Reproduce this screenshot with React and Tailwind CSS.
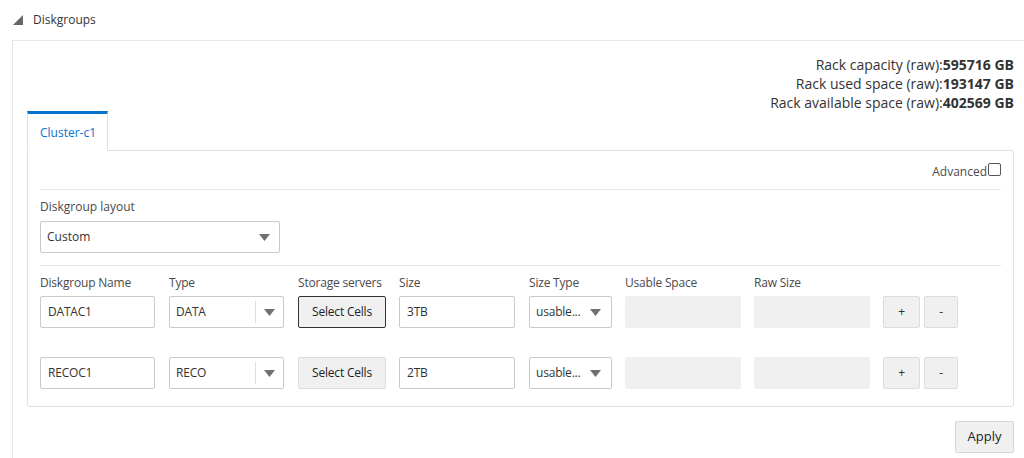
import React from "react";

const font = { fontFamily: '"Open Sans", "Noto Sans", Arial, sans-serif' };

function Caret() {
  return (
    <svg width="11" height="7" viewBox="0 0 11 7" className="block">
      <path d="M0 0 L11 0 L5.5 7 Z" fill="#707070" />
    </svg>
  );
}

function Label({ w, children }) {
  return <div className={`${w} shrink-0 text-[12px] tracking-[-0.2px] text-[#4a4a4a] leading-[16px]`}>{children}</div>;
}

function Row({ name, type, focused, size }) {
  return (
    <div className="flex items-center h-[32px] tracking-[-0.2px]">
      <div className="w-[115px] h-[32px] shrink-0 border border-[#c9c9c9] rounded-[2px] flex items-center px-[7px] text-[12px] text-[#333]">{name}</div>
      <div className="w-[115px] h-[32px] ml-[14px] shrink-0 border border-[#c9c9c9] rounded-[2px] flex items-center text-[12px] text-[#333]">
        <div className="flex-1 px-[6px]">{type}</div>
        <div className="w-px h-[22px] bg-[#e0e0e0]" />
        <div className="w-[27px] flex justify-center"><Caret /></div>
      </div>
      <div className={`w-[88px] h-[32px] ml-[14px] shrink-0 rounded-[2px] flex items-center justify-center text-[12px] text-[#222] bg-[#f0f0f0] ${focused ? "border border-[#333]" : "border border-[#dcdcdc]"}`}>Select Cells</div>
      <div className="w-[116px] h-[32px] ml-[13px] shrink-0 border border-[#c9c9c9] rounded-[2px] flex items-center px-[7px] text-[12px] text-[#333]">{size}</div>
      <div className="w-[83px] h-[32px] ml-[14px] shrink-0 border border-[#c9c9c9] rounded-[2px] flex items-center text-[12px] text-[#333]">
        <div className="flex-1 pl-[6px]">usable...</div>
        <div className="pr-[10px]"><Caret /></div>
      </div>
      <div className="w-[116px] h-[32px] ml-[13px] shrink-0 rounded-[2px] bg-[#f0f0f0]" />
      <div className="w-[116px] h-[32px] ml-[13px] shrink-0 rounded-[2px] bg-[#f0f0f0]" />
      <div className="w-[37px] h-[32px] ml-[13px] shrink-0 rounded-[2px] bg-[#f0f0f0] border border-[#dcdcdc] flex items-center justify-center text-[12px] text-[#333]">+</div>
      <div className="w-[34px] h-[32px] ml-[4px] shrink-0 rounded-[2px] bg-[#f0f0f0] border border-[#dcdcdc] flex items-center justify-center text-[12px] text-[#333]">-</div>
    </div>
  );
}

export default function App() {
  return (
    <div className="w-[1024px] h-[458px] bg-white overflow-hidden text-[#333]" style={font}>
      <div className="flex items-center h-[40px] pl-[13px]">
        <svg width="10" height="10" viewBox="0 0 10 10" className="block mt-[-1px]">
          <path d="M10 0 L10 10 L0 10 Z" fill="#666" />
        </svg>
        <span className="ml-[10px] text-[12px] text-[#333]">Diskgroups</span>
      </div>
      <div className="ml-[12px] border-l border-t border-[#e6e6e6] h-[418px] pr-[10px]">
        <div className="flex flex-col items-end pt-[14px] text-[14px] leading-[19px] text-[#333]">
          <div>Rack capacity (raw):<b>595716 GB</b></div>
          <div>Rack used space (raw):<b>193147 GB</b></div>
          <div>Rack available space (raw):<b>402569 GB</b></div>
        </div>
        <div className="ml-[14px] mt-[-1px]">
          <div className="flex">
            <div className="w-[81px] h-[40px] border-t-[3px] border-t-[#0572ce] border-x border-x-[#e0e0e0] bg-white flex items-center pl-[12px] text-[12px] text-[#0572ce] relative z-10 mb-[-1px]">Cluster-c1</div>
          </div>
          <div className="border border-[#e0e0e0] rounded-[3px] h-[257px] px-[12px]">
            <div className="flex justify-end items-center h-[38px] text-[12px] text-[#4a4a4a] pt-[3px]">
              Advanced
              <span className="inline-block w-[13px] h-[13px] border border-[#555] rounded-[2px] ml-[1px] mb-[4px]" />
            </div>
            <div className="border-t border-[#e6e6e6]" />
            <div className="pt-[9px] text-[12px] text-[#4a4a4a] leading-[16px]">Diskgroup layout</div>
            <div className="mt-[6px] w-[240px] h-[32px] border border-[#c9c9c9] rounded-[2px] flex items-center justify-between px-[6px] text-[12px] text-[#333]">
              <span>Custom</span>
              <span className="pr-[3px]"><Caret /></span>
            </div>
            <div className="border-t border-[#e6e6e6] mt-[12px]" />
            <div className="flex pt-[9px]">
              <Label w="w-[129px]">Diskgroup Name</Label>
              <Label w="w-[129px]">Type</Label>
              <Label w="w-[101px]">Storage servers</Label>
              <Label w="w-[130px]">Size</Label>
              <Label w="w-[96px]">Size Type</Label>
              <Label w="w-[129px]">Usable Space</Label>
              <Label w="w-[129px]">Raw Size</Label>
            </div>
            <div className="mt-[5px]">
              <Row name="DATAC1" type="DATA" focused size="3TB" />
            </div>
            <div className="mt-[29px]">
              <Row name="RECOC1" type="RECO" size="2TB" />
            </div>
          </div>
          <div className="flex justify-end mt-[14px]">
            <div className="w-[59px] h-[32px] rounded-[2px] bg-[#f0f0f0] border border-[#d6d6d6] flex items-center justify-center text-[13px] text-[#222]">Apply</div>
          </div>
        </div>
      </div>
    </div>
  );
}
